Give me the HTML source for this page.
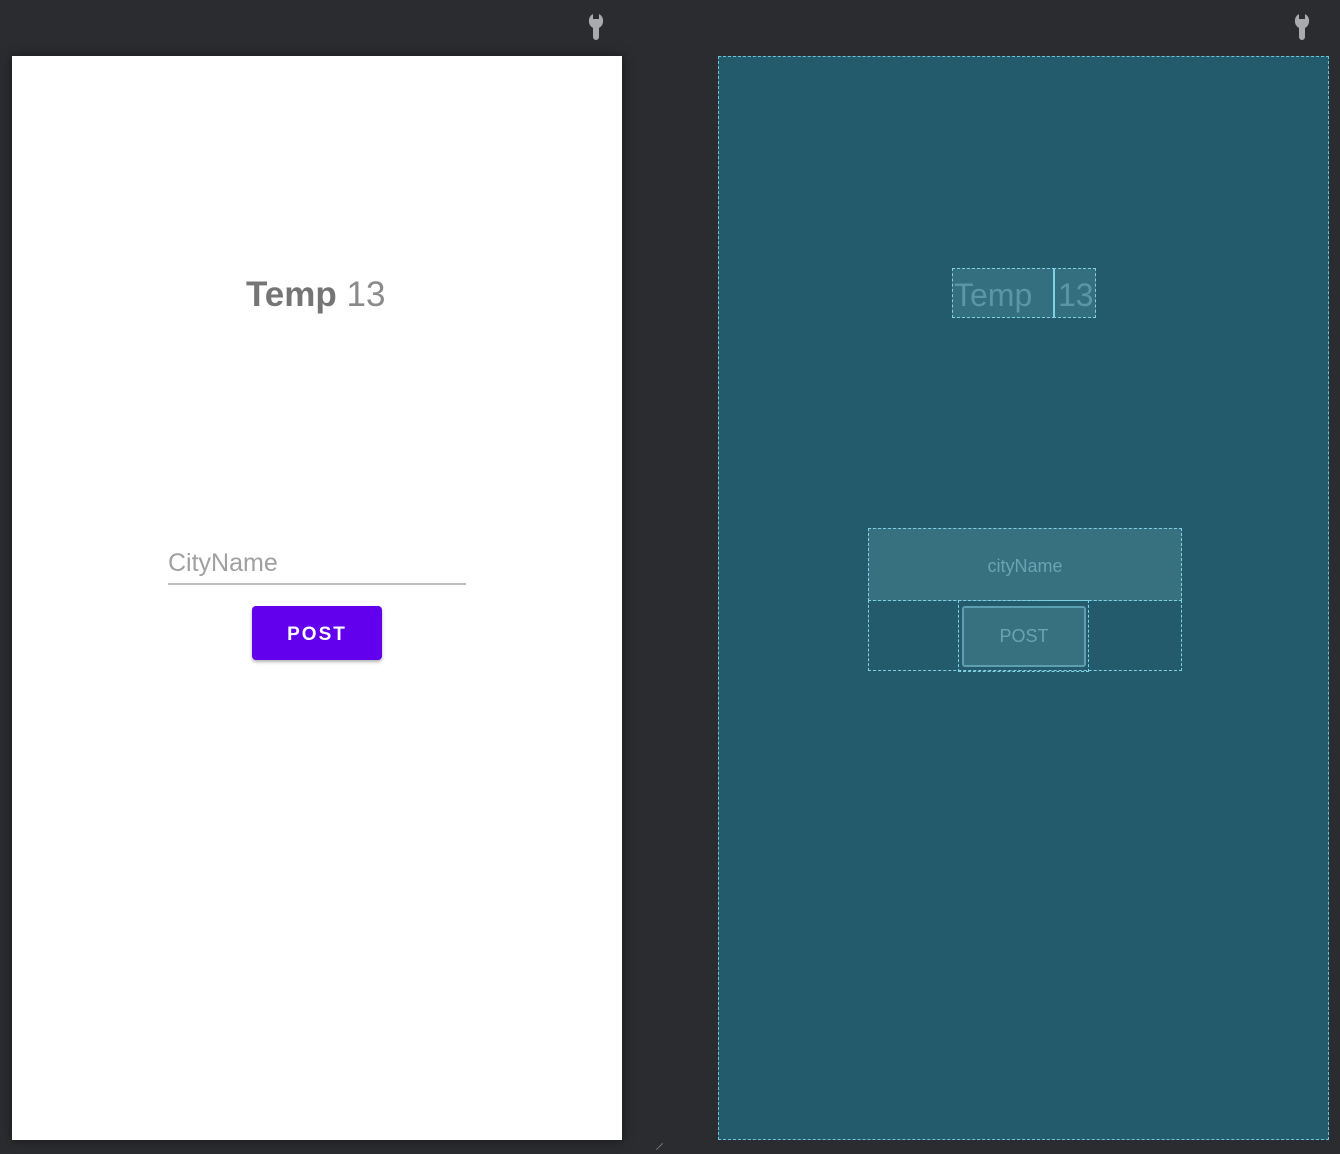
<!DOCTYPE html>
<html><head><meta charset="utf-8"><style>
html,body{margin:0;padding:0}
body{width:1340px;height:1154px;background:#2b2c2f;position:relative;overflow:hidden;font-family:"Liberation Sans",Roboto,sans-serif}
.abs{position:absolute;box-sizing:border-box}
.phone{left:12px;top:56px;width:610px;height:1084px;background:#fff;box-shadow:0 0 10px rgba(0,0,0,.5)}
.bp{left:718px;top:56px;width:611px;height:1084px;background:#235b6d;border:1.5px dashed #6ec3d6}
.dash{border:1.5px dashed #7fd0e2}
</style></head><body>
<svg class="abs" style="left:586px;top:11px" width="20" height="30" viewBox="0 0 20 30"><path d="M7 3 A8 8 0 0 0 7 17 L7 26 A3 3 0 0 0 13 26 L13 17 A8 8 0 0 0 13 3 L13 8 L7 8 Z" fill="#a9aaad"/></svg>
<svg class="abs" style="left:1292px;top:11px" width="20" height="30" viewBox="0 0 20 30"><path d="M7 3 A8 8 0 0 0 7 17 L7 26 A3 3 0 0 0 13 26 L13 17 A8 8 0 0 0 13 3 L13 8 L7 8 Z" fill="#a9aaad"/></svg>
<div class="abs phone"></div>
<div class="abs" style="left:246px;top:275px;font-size:35px;color:#757575;white-space:nowrap"><span style="font-weight:bold">Temp</span> <span style="font-weight:300;color:#8a8a8a">13</span></div>
<div class="abs" style="left:168px;top:549px;font-size:25px;color:#a0a0a0">CityName</div>
<div class="abs" style="left:168px;top:583px;width:298px;height:2px;background:#bdbdbd"></div>
<div class="abs" style="left:252px;top:606px;width:130px;height:54px;background:#6200ee;border-radius:4px;box-shadow:0 2px 3px rgba(0,0,0,.3);color:#fff;font-size:19px;font-weight:600;letter-spacing:2px;text-align:center;line-height:58px">POST</div>
<div class="abs bp"></div>
<div class="abs dash" style="left:952px;top:268px;width:103px;height:50px;background:#346f80;color:#5a96a6;font-size:32px;line-height:52px;padding-left:1px">Temp</div>
<div class="abs dash" style="left:1053px;top:268px;width:43px;height:50px;background:#346f80;color:#5a96a6;font-size:32px;line-height:52px;border-left:2px solid #7fd0e2;padding-left:3px">13</div>
<div class="abs dash" style="left:868px;top:528px;width:314px;height:73px;background:#37717f;color:#6aa3b2;font-size:18px;text-align:center;line-height:74px">cityName</div>
<div class="abs dash" style="left:868px;top:600px;width:314px;height:71px"></div>
<div class="abs dash" style="left:958px;top:600px;width:131px;height:72px"></div>
<div class="abs" style="left:962px;top:606px;width:124px;height:61px;border:2px solid #5b9fb1;border-radius:3px;background:#37717f;color:#6aa3b2;font-size:18px;text-align:center;line-height:56px">POST</div>
<div class="abs" style="left:655px;top:1146px;width:9px;height:1px;background:#777;transform:rotate(-45deg)"></div>
</body></html>
